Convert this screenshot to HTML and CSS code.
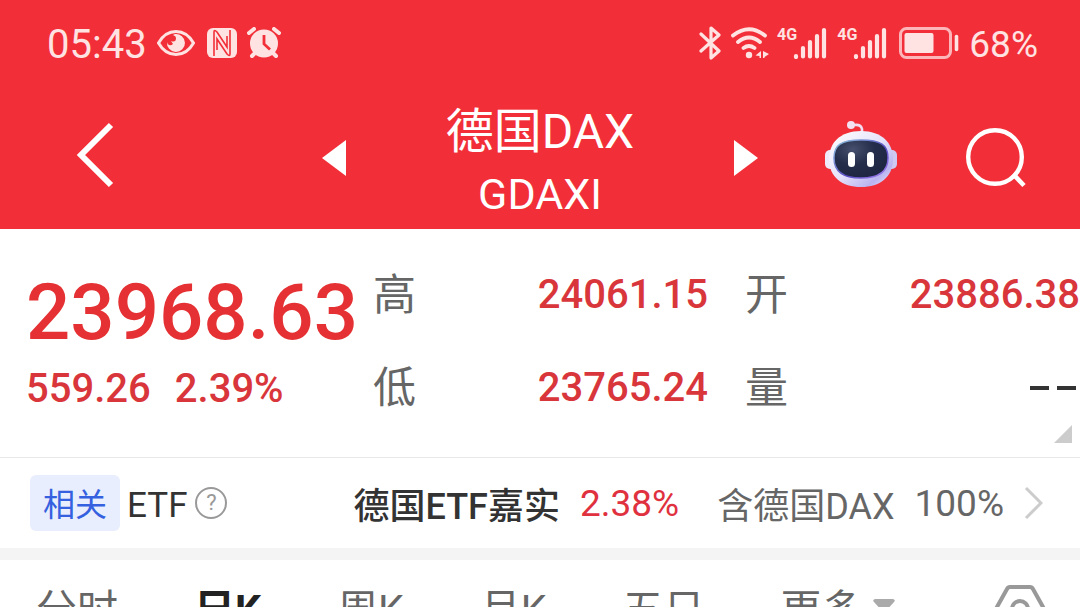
FILE: index.html
```html
<!DOCTYPE html>
<html lang="zh-CN">
<head>
<meta charset="utf-8">
<meta name="viewport" content="width=device-width, initial-scale=1">
<title>德国DAX</title>
<link rel="stylesheet" href="styles.css">
</head>
<body>
<header class="top">
  <div class="status">
    <div class="status-group">
      <span class="clock">05:43</span>
      <svg class="icon" width="38" height="28" viewBox="0 0 38 28"><path d="M1.500 14C6 6 12 2.500 19 2.500S32 6 36.500 14C32 22 26 25.500 19 25.500S6 22 1.500 14Z" fill="none" stroke="currentColor" stroke-width="3"/><path d="M18 5A9 9 0 1 1 10 13C11 17 14 17 16 15L14 12Q19 14 19 9Q19 7 16 6Z" fill="currentColor"/></svg>
      <svg class="icon nfc" width="30" height="30" viewBox="0 0 30 30"><rect width="30" height="30" rx="6" fill="currentColor"/><path d="M7 28V4Q7 1 10 4L20 19V8M23 2V26Q23 29 20 26L10 11V22" fill="none" stroke="#f22f38" stroke-width="1.600"/></svg>
      <svg class="icon" width="34" height="32" viewBox="0 0 34 32"><circle cx="17" cy="16.500" r="14" fill="currentColor"/><path d="M2 6 7 2M32 6 27 2" stroke="currentColor" stroke-width="4" stroke-linecap="round"/><path d="M8 26 5 29M26 26 29 29" stroke="currentColor" stroke-width="4" stroke-linecap="round"/><path d="M17 8V17L23 22.500" fill="none" stroke="#f22f38" stroke-width="2.800"/></svg>
    </div>
    <div class="status-group">
      <svg class="icon" width="24" height="34" viewBox="0 0 24 34"><path d="M2 8 20 25 12 32V2L20 9 2 25" fill="none" stroke="currentColor" stroke-width="3.200" stroke-linejoin="round" stroke-linecap="round"/></svg>
      <svg class="icon wifi" width="38" height="32" viewBox="0 0 38 32"><g fill="none" stroke="currentColor" stroke-width="3.800" stroke-linecap="round"><path d="M2 8.500Q18 -4 34 8.500M7 15Q18 6 29 15M12.500 21Q18 17 23.500 21"/></g><circle cx="18" cy="28" r="3.200" fill="currentColor"/><path d="M30 24V31H28.500V29L24.500 28.500ZM32 24V31H33.500V30L38 27Z" fill="currentColor"/></svg>
      <span class="signal"><span class="gen">4G</span><svg class="bars" width="34" height="32" viewBox="0 0 34 32"><path d="M3 30V29M10 29.500V21M17 29.500V15M24 29.500V9M31 29.500V3" stroke="currentColor" stroke-width="4.200" stroke-linecap="round"/></svg></span>
      <span class="signal"><span class="gen">4G</span><svg class="bars" width="34" height="32" viewBox="0 0 34 32"><path d="M3 30V29M10 29.500V21M17 29.500V15M24 29.500V9M31 29.500V3" stroke="currentColor" stroke-width="4.200" stroke-linecap="round"/></svg></span>
      <svg class="icon battery" width="60" height="32" viewBox="0 0 60 32"><rect x="1.500" y="1.500" width="50" height="29" rx="6" fill="none" stroke="currentColor" stroke-opacity=".75" stroke-width="3"/><rect x="5.500" y="6" width="29" height="20" rx="2" fill="currentColor"/><path d="M57.500 9.500V22.500" stroke="currentColor" stroke-width="3.600" stroke-linecap="round"/></svg>
      <span class="percent">68%</span>
    </div>
  </div>
  <nav class="nav">
    <button class="plain back" aria-label="返回"><svg width="38" height="66" viewBox="0 0 38 66"><path d="M35 3 5 33 35 63" fill="none" stroke="#fff" stroke-width="6"/></svg></button>
    <div class="switcher">
      <button class="plain" aria-label="上一个"><svg width="24" height="36" viewBox="0 0 24 36"><path d="M24 0V36L0 18Z" fill="#fff"/></svg></button>
      <h1 class="title">德国DAX<span class="code">GDAXI</span></h1>
      <button class="plain" aria-label="下一个"><svg width="24" height="36" viewBox="0 0 24 36"><path d="M0 0V36L24 18Z" fill="#fff"/></svg></button>
    </div>
    <div class="actions">
      <button class="plain robot" aria-label="智能助手"><svg width="72" height="68" viewBox="0 0 72 68">
        <defs>
          <linearGradient id="shell" x1="0" y1="0" x2="1" y2="1"><stop offset="0" stop-color="#fff"/><stop offset=".5" stop-color="#e6e3fa"/><stop offset=".8" stop-color="#b9b4f0"/><stop offset="1" stop-color="#f3eefc"/></linearGradient>
          <linearGradient id="rim" x1="0" y1="0" x2="1" y2="1"><stop offset="0" stop-color="#8fc6dc"/><stop offset=".6" stop-color="#5a4bc4"/><stop offset="1" stop-color="#a884ef"/></linearGradient>
          <radialGradient id="face" cx=".35" cy=".25" r=".8"><stop offset="0" stop-color="#46506e"/><stop offset=".5" stop-color="#242d49"/><stop offset="1" stop-color="#1d2541"/></radialGradient>
        </defs>
        <path d="M37 13V9Q36 4 29 5" fill="none" stroke="#f1dcf0" stroke-width="2.600"/><circle cx="26" cy="5" r="4" fill="#f3e1f1"/>
        <rect x="0" y="30" width="12" height="19" rx="5" fill="#eeeafa"/><rect x="60" y="30" width="12" height="19" rx="5" fill="#cfc8f3"/>
        <path d="M36 11C57 11 68 23 68 39C68 57 55 67 36 67S4 57 4 39C4 23 15 11 36 11Z" fill="url(#shell)"/>
        <path d="M36 20C56 20 63 25 63 38C63 52 54 58 36 58S9 52 9 38C9 25 16 20 36 20Z" fill="url(#face)" stroke="url(#rim)" stroke-width="1.500"/>
        <rect x="23" y="32" width="7" height="15" rx="3.500" fill="#fff"/><rect x="42" y="32" width="7" height="15" rx="3.500" fill="#fff"/>
      </svg></button>
      <button class="plain" aria-label="搜索"><svg width="60" height="60" viewBox="0 0 60 60"><circle cx="29" cy="29" r="26.800" fill="none" stroke="#fff" stroke-width="4.400"/><path d="M47 46 58 57.500" stroke="#fff" stroke-width="4.600"/></svg></button>
    </div>
  </nav>
</header>
<main>
  <section class="quote">
    <div class="price">
      <strong class="last">23968.63</strong>
      <div class="change"><span>559.26</span><span>2.39%</span></div>
    </div>
    <dl class="stats">
      <div class="stat"><dt>高</dt><dd>24061.15</dd></div>
      <div class="stat"><dt>开</dt><dd>23886.38</dd></div>
      <div class="stat"><dt>低</dt><dd>23765.24</dd></div>
      <div class="stat"><dt>量</dt><dd class="none"><svg width="46" height="4" viewBox="0 0 46 4" role="img" aria-label="无数据"><path d="M0 2H19M27 2H46" stroke="#333" stroke-width="4"/></svg></dd></div>
    </dl>
    <button class="plain expand" aria-label="展开"><svg width="18" height="18" viewBox="0 0 18 18"><path d="M18 0V18H0Z" fill="#ccc"/></svg></button>
  </section>
  <section class="related">
    <span class="tag">相关</span>
    <span class="etf">ETF</span>
    <button class="plain help" aria-label="说明">?</button>
    <a class="fund" href="#"><span class="fund-name">德国ETF嘉实</span><span class="fund-rate">2.38%</span><span class="fund-part">含德国DAX</span><span class="fund-share">100%</span><svg width="19" height="34" viewBox="0 0 19 34"><path d="M2 2 17 17 2 32" fill="none" stroke="#ccc" stroke-width="3"/></svg></a>
  </section>
  <nav class="tabs">
    <button class="tab">分时</button>
    <button class="tab active">日K</button>
    <button class="tab">周K</button>
    <button class="tab">月K</button>
    <button class="tab">五日</button>
    <button class="tab">更多<svg class="caret" width="22" height="14" viewBox="0 0 22 14"><path d="M2 0H20Q23 1 21 3L12 13H10L1 3Q-1 1 2 0Z" fill="#aaa"/></svg></button>
    <button class="tab settings" aria-label="设置"><svg width="52" height="48" viewBox="0 0 52 48"><path d="M16 2H36Q38 2 39 4L49 22Q50 24 49 26L39 44Q38 46 36 46H16Q14 46 13 44L3 26Q2 24 3 22L13 4Q14 2 16 2Z" fill="none" stroke="#999" stroke-width="4"/><circle cx="26" cy="24" r="8" fill="none" stroke="#999" stroke-width="4"/></svg></button>
  </nav>
</main>
</body>
</html>
```
FILE: styles.css
```css
* { box-sizing: border-box; }
body {
  margin: 0;
  height: 100vh;
  overflow: hidden;
  background: #fff;
  color: #333;
  font-family: Roboto, "Noto Sans CJK SC", sans-serif;
}
svg { display: block; flex: none; }
.plain {
  display: block;
  border: 0;
  padding: 0;
  background: none;
  font: inherit;
  color: inherit;
}
.top { background: #f22f38; color: #fff; }
.status {
  display: flex;
  justify-content: space-between;
  height: 86px;
  padding: 0 42px 0 47px;
  color: #ffe3e3;
}
.status-group { display: flex; align-items: center; }
.clock { font-size: 40px; line-height: 44px; margin: 4px 10px 0 0; }
.nfc { margin: 0 10px 0 12px; }
.wifi { margin: 0 8px; }
.signal { display: flex; margin-right: 10px; }
.gen { font-size: 16px; line-height: 16px; font-weight: 700; margin-right: -4px; }
.battery { margin: 0 10px 0 2px; }
.percent { font-size: 37px; line-height: 44px; margin-top: 4px; }
.nav {
  display: grid;
  grid-template-columns: 1fr 436px 1fr;
  height: 143px;
  align-items: center;
}
.back { margin: 0 auto 6px 76px; }
.switcher { display: flex; align-items: center; justify-content: space-between; }
.title {
  margin: 0;
  padding-top: 10px;
  font-size: 48px;
  line-height: 62px;
  font-weight: 400;
  text-align: center;
}
.code { display: block; font-size: 43px; }
.actions {
  display: flex;
  align-items: center;
  justify-content: space-between;
  padding: 0 54px 0 67px;
}
.robot { margin-bottom: 8px; }
.quote {
  position: relative;
  display: grid;
  grid-template-columns: 347fr 707fr;
  height: 229px;
  padding: 19px 0 0 26px;
  border-bottom: 1px solid #e8e8e8;
}
.price { padding-top: 16px; color: #e53133; font-weight: 500; }
.last { display: block; font-size: 78px; line-height: 98px; font-weight: 500; }
.change { display: flex; gap: 24px; font-size: 40px; line-height: 54px; color: #d9363c; }
.stats {
  display: grid;
  grid-template-columns: 1fr 1fr;
  grid-auto-rows: 93px;
  column-gap: 37px;
  margin: 0;
}
.stat { display: flex; align-items: center; justify-content: space-between; }
.stat dt { font-size: 43px; line-height: 64px; color: #666; }
.stat dd { margin: 0; font-size: 40px; font-weight: 500; color: #d9363c; }
.stat .none { padding-right: 4px; }
.expand { position: absolute; right: 8px; bottom: 14px; }
.related {
  display: flex;
  align-items: center;
  height: 90px;
  padding: 0 37px 0 30px;
  font-size: 36px;
}
.tag {
  padding: 4px 13px 0;
  border-radius: 6px;
  background: #e8eefd;
  color: #3560e0;
  font-size: 32px;
  line-height: 52px;
}
.etf { margin: 0 8px 0 7px; padding-top: 4px; font-size: 35px; }
.help {
  width: 32px;
  height: 32px;
  border: 2px solid #999;
  border-radius: 50%;
  color: #999;
  font-size: 22px;
  line-height: 28px;
}
.fund {
  display: flex;
  align-items: center;
  margin-left: auto;
  color: #666;
  text-decoration: none;
}
.fund-name { color: #333; font-weight: 500; }
.fund-rate { margin: 0 38px 0 20px; color: #e0313f; font-size: 37px; }
.fund-share { margin: 0 20px 0 20px; font-size: 37px; }
.tabs {
  display: flex;
  align-items: flex-start;
  gap: 76px;
  padding: 16px 34px 0 36px;
  border-top: 12px solid #f4f4f4;
}
.tab {
  display: flex;
  align-items: center;
  gap: 10px;
  border: 0;
  padding: 4px 0 0;
  background: none;
  font: inherit;
  font-size: 41px;
  line-height: 60px;
  color: #666;
}
.active { color: #222; font-weight: 700; }
.caret { margin-bottom: 8px; }
.settings { margin: 5px 0 0 auto; }
```
